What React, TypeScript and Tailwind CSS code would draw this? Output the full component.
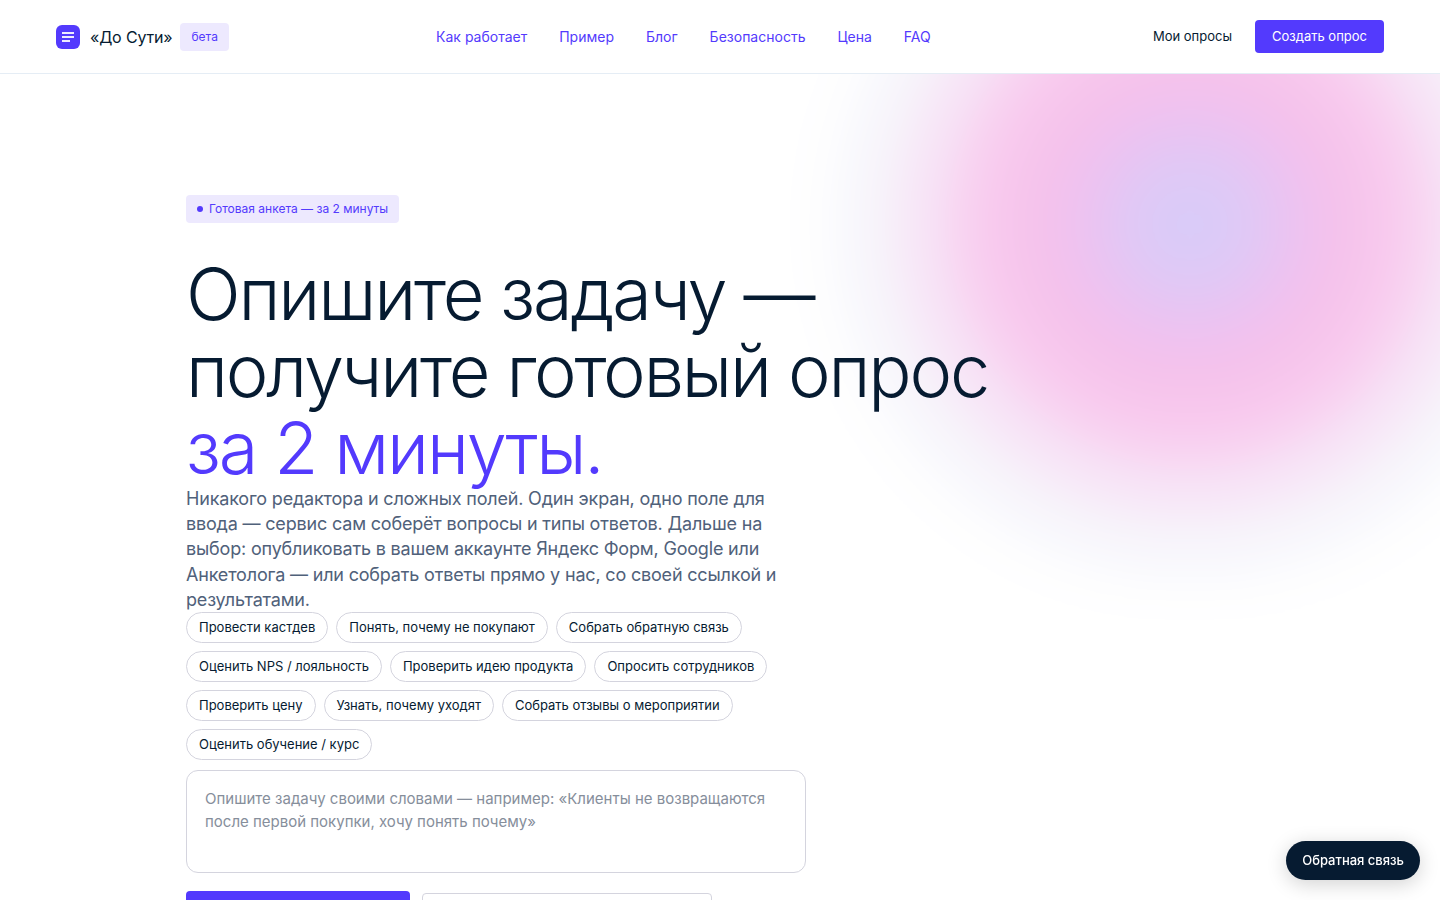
const navItems = [
  { label: "Как работает", href: "#how" },
  { label: "Пример", href: "#example" },
  { label: "Блог", href: "#blog" },
  { label: "Безопасность", href: "#security" },
  { label: "Цена", href: "#price" },
  { label: "FAQ", href: "#faq" },
];

const presets = [
  "Провести кастдев",
  "Понять, почему не покупают",
  "Собрать обратную связь",
  "Оценить NPS / лояльность",
  "Проверить идею продукта",
  "Опросить сотрудников",
  "Проверить цену",
  "Узнать, почему уходят",
  "Собрать отзывы о мероприятии",
  "Оценить обучение / курс",
];

function Logo() {
  return (
    <svg width="24" height="24" viewBox="0 0 24 24" fill="none" aria-hidden="true">
      <rect width="24" height="24" rx="6" fill="#533afd" />
      <path d="M6 8h12M6 12h12M6 16h8" stroke="white" strokeOpacity="0.9" strokeWidth="1.8" />
    </svg>
  );
}

function Header() {
  return (
    <header className="relative z-10 flex items-center justify-between border-b border-[#e5edf5] bg-white px-14 py-5">
      <div className="flex items-center gap-2">
        <a href="#top" className="flex items-center gap-2.5 text-base tracking-[-0.01em]">
          <Logo />
          «До Сути»
        </a>
        <span className="rounded bg-[#ede9fe] px-[11px] py-1.5 text-xs text-[#533afd]">бета</span>
      </div>
      <nav className="flex gap-8 text-sm text-[#533afd]">
        {navItems.map((item) => (
          <a key={item.href} href={item.href}>
            {item.label}
          </a>
        ))}
      </nav>
      <div className="flex items-center gap-2 text-[13px]">
        <a href="#surveys" className="px-[15px]">
          Мои опросы
        </a>
        <a href="#create" className="rounded bg-[#533afd] px-[17px] py-1.5 leading-[21px] text-white">
          Создать опрос
        </a>
      </div>
    </header>
  );
}

function Hero() {
  return (
    <section className="relative overflow-hidden px-14 pt-[121px] pb-24">
      <div
        aria-hidden="true"
        className="pointer-events-none absolute -top-[300px] -right-[200px] size-[900px] bg-[radial-gradient(circle,#d9cbf8_0px,#dccaf7_30px,#e1c8f5_60px,#e9c4f2_92px,#f0c2ef_120px,#f4c2ec_145px,#f6c5ec_170px,#f8caee_198px,#f8d4f1_228px,#f7e0f5_255px,#f7eaf8_285px,#f7f3fa_312px,#f9f9fd_345px,#fdfdfe_370px,#ffffff_410px)] blur-[8px]"
      />
      <div className="relative mx-auto max-w-[1068px]">
        <div className="mb-8 flex w-fit items-center gap-1.5 rounded bg-[#ede9fe] px-[11px] py-1.5 text-xs text-[#533afd]">
          <span className="size-1.5 rounded-full bg-[#533afd]" />
          Готовая анкета — за 2 минуты
        </div>
        <h1 className="max-w-[900px] text-[72px] leading-[77px] font-light tracking-[-0.03em]">
          Опишите задачу — получите готовый опрос <span className="block text-[#533afd]">за 2 минуты.</span>
        </h1>
        <p className="max-w-[600px] text-lg leading-[1.4] tracking-[-0.01em] text-[#50617a]">
          Никакого редактора и сложных полей. Один экран, одно поле для ввода — сервис сам соберёт вопросы и типы
          ответов. Дальше на выбор: опубликовать в вашем аккаунте Яндекс Форм, Google или Анкетолога — или собрать
          ответы прямо у нас, со своей ссылкой и результатами.
        </p>
        <form className="max-w-[620px]">
          <div className="mb-2.5 flex flex-wrap gap-2">
            {presets.map((preset) => (
              <button
                key={preset}
                type="button"
                className="rounded-full border border-[#d4d4de] bg-white px-3 py-1 text-[13px] leading-[21px]"
              >
                {preset}
              </button>
            ))}
          </div>
          <textarea
            aria-label="Описание задачи"
            placeholder="Опишите задачу своими словами — например: «Клиенты не возвращаются после первой покупки, хочу понять почему»"
            className="block h-[103px] w-full resize-none rounded-xl border border-[#d4d4de] bg-white px-[18px] py-4 text-[15px] leading-[23px] placeholder:text-[#868e9b]"
          />
          <div className="mt-[18px] flex items-center gap-3 text-base">
            <button type="submit" className="h-13 w-56 rounded bg-[#533afd] text-white">
              Создать опрос
            </button>
            <a
              href="#example"
              className="flex h-12 w-[290px] items-center justify-center rounded border border-[#d4d4de] bg-white"
            >
              Пример
            </a>
          </div>
        </form>
      </div>
    </section>
  );
}

export default function App() {
  return (
    <div id="top" className="min-h-screen bg-white font-[Inter,sans-serif] text-[#061b31]">
      <Header />
      <main>
        <Hero />
      </main>
      <button
        type="button"
        className="fixed right-5 bottom-5 z-20 rounded-full bg-[#061b31] px-4 py-2.5 text-[13px] leading-[19px] font-medium text-white shadow-[0_4px_20px_rgba(0,0,0,0.18)]"
      >
        Обратная связь
      </button>
    </div>
  );
}
